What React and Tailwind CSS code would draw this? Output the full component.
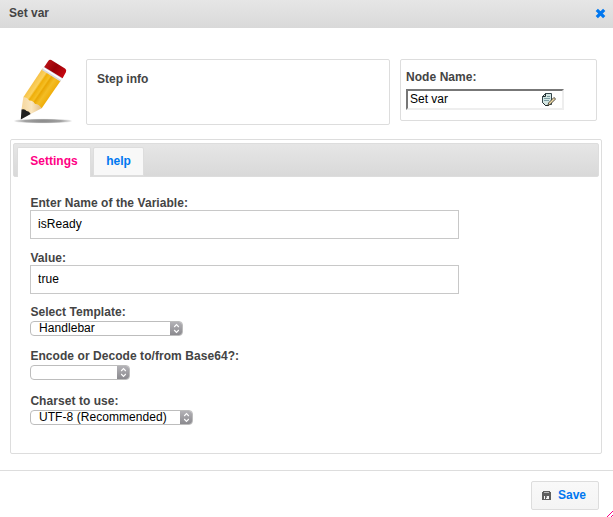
import React from "react";

function Pencil() {
  return (
    <svg className="block h-[70px] w-[64px]" viewBox="12 56 64 70">
      <defs>
        <linearGradient id="wood" gradientUnits="userSpaceOnUse" x1="32" y1="83" x2="51" y2="96">
          <stop offset="0" stopColor="#f6c044" />
          <stop offset=".24" stopColor="#fbd261" />
          <stop offset=".32" stopColor="#efae09" />
          <stop offset=".48" stopColor="#f5bf25" />
          <stop offset=".55" stopColor="#e9a603" />
          <stop offset=".72" stopColor="#f3bd25" />
          <stop offset="1" stopColor="#efab05" />
        </linearGradient>
        <linearGradient id="eraser" gradientUnits="userSpaceOnUse" x1="47" y1="62" x2="65" y2="75">
          <stop offset="0" stopColor="#b91216" />
          <stop offset=".45" stopColor="#980006" />
          <stop offset="1" stopColor="#c90811" />
        </linearGradient>
        <linearGradient id="cone" x1="0" y1="0" x2="1" y2="0">
          <stop offset="0" stopColor="#f6d79c" />
          <stop offset=".5" stopColor="#fae6c0" />
          <stop offset="1" stopColor="#e2bd83" />
        </linearGradient>
        <radialGradient id="shade">
          <stop offset="0" stopColor="#858585" />
          <stop offset=".65" stopColor="#a2a2a2" />
          <stop offset="1" stopColor="#eee" />
        </radialGradient>
      </defs>
      <ellipse cx="43" cy="121" rx="29" ry="2.3" fill="url(#shade)" />
      <path d="M23.3 97.3 42.4 68.5 61 80.2 41.7 108.3Z" fill="url(#wood)" />
      <path d="M23.3 97.3Q27 97 29 100.5Q33 100 35 104Q39 104 41.7 108.3L30.7 114 21.5 109.5Z" fill="url(#cone)" />
      <path d="M21.5 109.5Q25 108.5 26.5 111Q29 110.8 30.7 114L20.8 119.4Z" fill="#202020" />
      <path d="M41.9 70 44.4 66.3 62.8 77.6 60.3 81.6Z" fill="#dadae2" />
      <path d="M43.5 68.2 61.6 79.3" stroke="#fff" strokeWidth="1.4" />
      <path d="M44.2 67 48.2 61.1Q49.4 59.2 51.3 60.1L65 68.6Q66.9 69.9 66 71.9L62.6 78.2Z" fill="url(#eraser)" />
    </svg>
  );
}

function NoteIcon() {
  return (
    <svg className="h-[15px] w-[15px] shrink-0" viewBox="0 0 15 15">
      <path d="M1.5 4.5 4.5 1.5h6v11h-2l-1 1h-3l-3-3Z" fill="#d3e6e3" stroke="#34454a" />
      <path d="M4.5 1.5v3h-3M1.5 10.5l3 3h3" fill="none" stroke="#1c2628" />
      <path d="M6 4.5h3M3 6.5h6M3 8.5h5" stroke="#7c9da3" />
      <path d="m6.8 13.6.9-2.8 5.2-5.3 1.7 1.5-5.3 5.2Z" fill="#eedaa8" stroke="#282620" strokeWidth=".8" />
    </svg>
  );
}

function Field({ label, value, gap }) {
  return (
    <div className={gap}>
      <label className="block h-[14px] pl-[0.4px] leading-[14px] font-bold tracking-[0.06px] text-[#444]">{label}</label>
      <input
        readOnly
        value={value}
        className="block h-[29px] w-[429px] border border-[#c8c8c8] bg-white px-[7px] pb-[2px] tracking-[0.06px] text-black outline-none"
      />
    </div>
  );
}

function Picker({ label, value, width, gap }) {
  return (
    <div className={gap}>
      <div className="h-4 pl-[0.4px] leading-[14px] font-bold tracking-[0.06px] text-[#444]">{label}</div>
      <div className={`flex h-[15px] overflow-hidden rounded-[4px] border border-[#bdbdbd] bg-white ${width}`}>
        <span className="flex-1 pl-2 leading-[13px] tracking-[0.06px] whitespace-nowrap text-black">{value}</span>
        <span className="-my-px -mr-px flex w-[13px] items-center justify-center bg-linear-to-b from-[#b6b5b9] to-[#88878c]">
          <svg width="7" height="11" viewBox="0 0 7 11" fill="none" stroke="white" strokeWidth="1.1">
            <path d="m1.2 4 2.3-2.4L5.8 4M1.2 7l2.3 2.4L5.8 7" />
          </svg>
        </span>
      </div>
    </div>
  );
}

export default function App() {
  return (
    <div className="relative flex h-[517px] w-[613px] flex-col overflow-hidden bg-white font-['Liberation_Sans',Arial,sans-serif] text-[12px]">
      <header className="flex h-7 shrink-0 items-center justify-between bg-linear-to-b from-[#e6e6e6] to-[#d9d9d9] pr-[7px] pl-[9px]">
        <h1 className="-mt-[2px] font-bold text-[#444]">Set var</h1>
        <svg className="-mt-px h-[11px] w-[11px]" viewBox="0 0 11 11">
          <path d="m1.8 1.8 7.4 7.4M9.2 1.8 1.8 9.2" stroke="#0077f0" strokeWidth="3.2" />
        </svg>
      </header>

      <section className="mt-7 flex h-[83px] shrink-0 items-start pl-3">
        <Pencil />
        <div className="mt-[3px] ml-[10px] h-[66px] w-[304px] rounded-[2px] border border-[#ddd] px-[10px] pt-3 leading-[14px] font-bold text-[#444]">
          Step info
        </div>
        <div className="mt-[3px] ml-[10px] h-[62px] w-[197px] rounded-[2px] border border-[#ddd] px-[5px] pt-[10px]">
          <div className="h-[19px] leading-[14px] font-bold tracking-[0.06px] text-[#444]">Node Name:</div>
          <div className="flex h-[21px] w-[158px] items-center justify-between border-2 border-t-[#777] border-r-[#eee] border-b-[#eee] border-l-[#777] pr-[6px] pl-[2px] text-black">
            <span className="-mt-[2px] leading-[14px]">Set var</span>
            <NoteIcon />
          </div>
        </div>
      </section>

      <main className="ml-[10px] h-[315px] w-[592px] shrink-0 rounded-[2px] border border-[#ddd] px-[2px] pt-[3px]">
        <nav className="flex h-[34px] w-[586px] gap-[2px] rounded-[2px] border border-[#ddd] bg-linear-to-b from-[#e6e6e6] to-[#d9d9d9] pt-[3px] pl-[3px] font-bold">
          <div className="h-[30px] w-[74px] rounded-t-[2px] border border-b-0 border-[#ddd] bg-white pt-[6px] text-center leading-[14px] text-[#ff0084]">
            Settings
          </div>
          <div className="h-[29px] w-[51px] rounded-t-[2px] border border-[#ddd] bg-[#f8f8f8] pt-[6px] text-center leading-[14px] text-[#0077f0]">
            help
          </div>
        </nav>
        <div className="pt-[19px] pl-[17px]">
          <Field label="Enter Name of the Variable:" value="isReady" gap="" />
          <Field label="Value:" value="true" gap="mt-3" />
          <Picker label="Select Template:" value="Handlebar" width="w-[153px]" gap="mt-[11px]" />
          <Picker label="Encode or Decode to/from Base64?:" value="" width="w-[100px]" gap="mt-[13px]" />
          <Picker label="Charset to use:" value="UTF-8 (Recommended)" width="w-[163px]" gap="mt-[14px]" />
        </div>
      </main>

      <footer className="mt-4 flex h-[47px] shrink-0 items-start justify-end border-t border-[#ddd] pt-[10px] pr-[14px]">
        <button className="flex h-[29px] w-[68px] items-center gap-[7px] rounded-[2px] border border-[#ddd] bg-linear-to-b from-[#f9f9f9] to-[#f4f4f4] pl-[10px] font-bold text-[#0077f0]">
          <svg className="h-[9px] w-[9px]" viewBox="0 0 9 9" shapeRendering="crispEdges">
            <path d="M1 0h7v1h1v8H0V1h1z" fill="#5f5f5f" />
            <path d="M2 1h5v1H2z" fill="#bbb" />
            <path d="M2 5h1v3H2zM4 5h3v3H4z" fill="#f6f6f6" />
            <path d="M4 5h1v2H4z" fill="#888" />
          </svg>
          <span className="-mt-[2px]">Save</span>
        </button>
      </footer>
      <svg className="absolute right-0 bottom-0 h-[6px] w-[6px]" viewBox="0 0 6 6" shapeRendering="crispEdges">
        <path d="M0 5h1v1H0zM1 4h1v1H1zM2 3h1v1H2zM3 2h1v1H3zM4 1h1v1H4zM5 0h1v1H5zM4 5h1v1H4zM5 4h1v1H5z" fill="#ff0084" />
      </svg>
    </div>
  );
}
